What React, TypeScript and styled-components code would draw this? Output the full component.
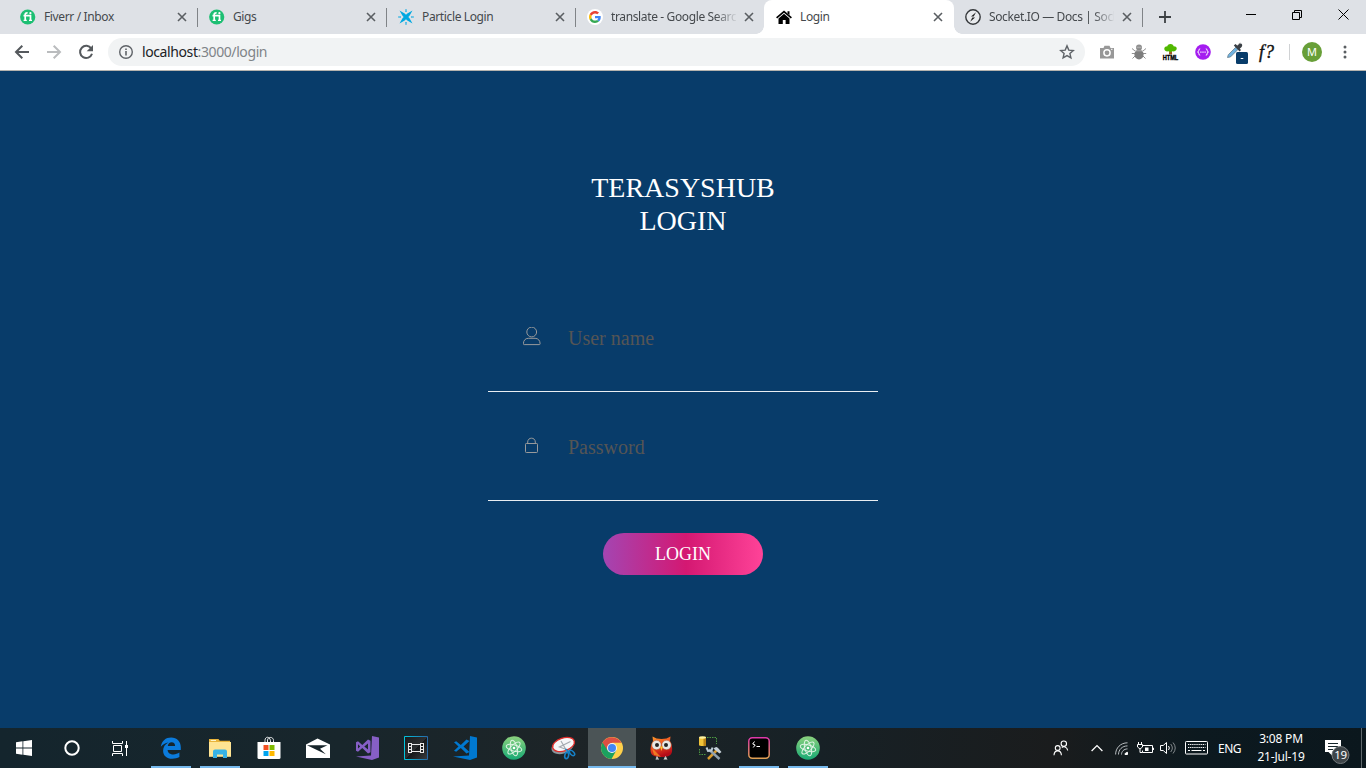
import React from 'react';
import styled, { createGlobalStyle } from 'styled-components';

const Global = createGlobalStyle`
  * { box-sizing: border-box; }
  html, body { margin: 0; padding: 0; }
  body { width: 1366px; height: 768px; overflow: hidden; background: #083c6a; }
  svg { display: block; flex: none; }
`;

const ui = `"Noto Sans", "Open Sans", sans-serif`;

const Screen = styled.div`
  display: flex;
  flex-direction: column;
  width: 1366px;
  height: 768px;
  overflow: hidden;
  font-family: ${ui};
`;

/* ---------- browser tab strip ---------- */
const TabStrip = styled.div`
  display: flex;
  flex: none;
  height: 34px;
  padding-left: 8px;
  background: #dee1e6;
`;

const Tab = styled.div<{ $active?: boolean; $divider?: boolean }>`
  position: relative;
  display: flex;
  flex: none;
  align-items: center;
  width: ${p => (p.$active ? 190 : 189)}px;
  height: 34px;
  margin-right: ${p => (p.$active ? -1 : 0)}px;
  padding: 0 ${p => (p.$active ? 1 : 0)}px 0 12px;
  border-radius: 8px 8px 0 0;
  background: ${p => (p.$active ? '#fff' : 'transparent')};
  ${p => p.$divider && `
    &::after {
      content: '';
      position: absolute;
      right: -1px;
      top: 8px;
      width: 1px;
      height: 19px;
      background: #808387;
    }`}
  ${p => p.$active && `
    &::before, &::after {
      content: '';
      position: absolute;
      bottom: 0;
      width: 8px;
      height: 8px;
    }
    &::before { left: -8px; background: radial-gradient(circle at 0 0, transparent 7.5px, #fff 8px); }
    &::after { right: -8px; background: radial-gradient(circle at 100% 0, transparent 7.5px, #fff 8px); }`}
`;

const TabTitle = styled.span<{ $fade?: boolean }>`
  flex: 1;
  margin-left: 8px;
  overflow: hidden;
  white-space: nowrap;
  font-size: 12px;
  line-height: 18px;
  letter-spacing: -0.37px;
  color: #45494d;
  ${p => p.$fade && `mask-image: linear-gradient(90deg, #000 104px, transparent 127px);`}
`;

const CloseSlot = styled.span`
  display: flex;
  justify-content: center;
  width: 16px;
  margin: 0 7px 0 5px;
`;

const NewTab = styled.div`
  display: flex;
  align-items: center;
  margin-left: 17px;
`;

const WindowButtons = styled.div`
  display: flex;
  height: 29px;
  margin-left: auto;
`;

const WindowButton = styled.span`
  display: flex;
  align-items: center;
  justify-content: center;
  width: 46px;
`;

/* ---------- browser toolbar ---------- */
const Toolbar = styled.div`
  display: flex;
  flex: none;
  align-items: center;
  height: 37px;
  padding: 0 13px 0 14px;
  background: #fff;
  border-bottom: 1px solid #b5b3ae;
`;

const NavButtons = styled.div`
  display: flex;
  gap: 16px;
`;

const AddressBar = styled.div`
  display: flex;
  align-items: center;
  width: 977px;
  height: 28px;
  margin-left: 14px;
  padding: 0 10px;
  border-radius: 14px;
  background: #f1f3f4;
`;

const Url = styled.span`
  flex: 1;
  margin-left: 8px;
  font-size: 14px;
  line-height: 20px;
  letter-spacing: -0.4px;
  color: #808488;
  b { font-weight: 400; color: #202124; }
`;

const Extensions = styled.div`
  display: flex;
  align-items: center;
  margin-left: 13px;
`;

const Extension = styled.span<{ $w: number }>`
  display: flex;
  justify-content: center;
  width: ${p => p.$w}px;
`;

const ToolDivider = styled.span`
  width: 1px;
  height: 16px;
  margin-left: 3px;
  background: #d0d2d4;
`;

const Avatar = styled.span`
  width: 20px;
  height: 20px;
  margin-left: 12px;
  border-radius: 50%;
  background: #689f38;
  color: #fff;
  font-size: 11px;
  line-height: 20px;
  text-align: center;
`;

const Menu = styled.span`
  margin-left: 20.5px;
`;

/* ---------- login page ---------- */
const Page = styled.main`
  display: flex;
  flex: 1;
  flex-direction: column;
  align-items: center;
  background: #083c6a;
  font-family: "Liberation Serif", "Times New Roman", serif;
`;

const Title = styled.h1`
  width: 200px;
  margin: 100px 0 46px;
  font-size: 28px;
  font-weight: 400;
  line-height: 33px;
  text-align: center;
  color: #fff;
`;

const Field = styled.label`
  display: flex;
  align-items: center;
  width: 390px;
  height: 109px;
  padding-left: 35px;
  border-bottom: 1px solid #e9eef2;
`;

const Input = styled.input`
  width: 280px;
  height: 30px;
  margin-left: 27px;
  padding: 2px 0 0;
  border: 0;
  outline: 0;
  background: transparent;
  font-family: inherit;
  font-size: 20px;
  color: #fff;
  &::placeholder { color: #555; opacity: 1; }
`;

const LoginButton = styled.button`
  width: 160px;
  height: 42px;
  margin-top: 32px;
  padding: 0;
  border: 0;
  border-radius: 21px;
  background: linear-gradient(90deg, #a445b2 0%, #d41872 52%, #ff4398 100%);
  color: #fff;
  font-family: inherit;
  font-size: 18px;
  line-height: 42px;
`;

/* ---------- taskbar ---------- */
const Taskbar = styled.footer`
  display: flex;
  flex: none;
  height: 40px;
  background: linear-gradient(90deg, #14252d 0, #18262c 25%, #1d2427 42%, #172126 60%, #1a1c1d 77%, #0c191f 88%, #0b171d 100%);
`;

const TaskSlot = styled.span<{ $open?: boolean; $active?: boolean }>`
  display: flex;
  flex: none;
  align-items: center;
  justify-content: center;
  width: 48px;
  background-color: ${p => (p.$active ? '#4b5456' : 'transparent')};
  ${p => (p.$open || p.$active) && `
    background-image: linear-gradient(#76b9ed, #76b9ed);
    background-repeat: no-repeat;
    background-position: center bottom;
    background-size: ${p.$active ? 48 : 40}px 2px;`}
`;

const Apps = styled.div`
  display: flex;
  gap: 1px;
  margin-left: 3px;
`;

const Tray = styled.div`
  display: flex;
  align-items: center;
  margin-left: auto;
  color: #fff;
  font-size: 12px;
`;

const TraySlot = styled.span<{ $w: number }>`
  display: flex;
  align-items: center;
  justify-content: center;
  width: ${p => p.$w}px;
`;

const Language = styled(TraySlot)`
  letter-spacing: -0.5px;
`;

const Clock = styled.div`
  width: 68px;
  text-align: center;
  line-height: 18px;
  letter-spacing: -0.2px;
`;

const ShowDesktop = styled.span`
  width: 5px;
  height: 40px;
  border-left: 1px solid #5f686c;
`;

/* ---------- icons ---------- */
const Close = () => (
  <svg width="10" height="10" viewBox="0 0 10 10" stroke="#5a5e62" strokeWidth="1.6">
    <path d="M1 1l8 8M9 1L1 9" />
  </svg>
);

const Fiverr = () => (
  <svg width="16" height="16" viewBox="0 0 16 16">
    <circle cx="7.7" cy="8" r="7.6" fill="#1dbf73" />
    <path d="M5.200 12V5.600q0-1.900 2.400-1.700M3.500 6.700h7v5.300" fill="none" stroke="#fff" strokeWidth="1.700" />
    <path d="M3.600 11.400h3.200M9 11.400h3" stroke="#fff" strokeWidth="1.200" />
    <circle cx="10.400" cy="4.200" r="1.100" fill="#fff" />
  </svg>
);

const Particle = () => (
  <svg width="16" height="16" viewBox="0 0 16 16" fill="#00a8e1">
    <path d="M1.500 1.500L6.700 4.500 8 5.700l1.300-1.200L14.500 1.500l-3 5.200L10.300 8l1.200 1.300 3 5.200-5.200-3L8 10.300l-1.300 1.200-5.200 3 3-5.200L5.700 8 4.500 6.700z" />
    <path d="M7.500 0h1l.3 3H7.200zM7.500 16h1l.3-3H7.200zM0 7.500v1l3 .3V7.200zM16 7.500v1l-3 .3V7.200z" opacity=".8" />
  </svg>
);

const Google = () => (
  <svg width="16" height="16" viewBox="0 0 16 16">
    <circle cx="8" cy="8" r="8" fill="#fff" />
    <g transform="translate(2 2) scale(.25)">
      <path fill="#EA4335" d="M24 9.500c3.540 0 6.710 1.220 9.210 3.600l6.850-6.850C35.900 2.380 30.470 0 24 0 14.620 0 6.510 5.380 2.560 13.220l7.980 6.190C12.430 13.720 17.740 9.500 24 9.500z" />
      <path fill="#4285F4" d="M46.980 24.550c0-1.570-.15-3.090-.38-4.550H24v9.020h12.940c-.58 2.960-2.260 5.480-4.780 7.180l7.730 6c4.510-4.180 7.090-10.360 7.090-17.650z" />
      <path fill="#FBBC05" d="M10.530 28.590c-.48-1.450-.76-2.990-.76-4.590s.27-3.140.76-4.590l-7.980-6.190C.92 16.460 0 20.120 0 24c0 3.880.92 7.540 2.560 10.780z" />
      <path fill="#34A853" d="M24 48c6.480 0 11.930-2.130 15.890-5.810l-7.730-6c-2.150 1.450-4.920 2.300-8.160 2.300-6.260 0-11.570-4.220-13.470-9.910l-7.980 6.190C6.510 42.620 14.620 48 24 48z" />
    </g>
  </svg>
);

const Home = () => (
  <svg width="16" height="16" viewBox="0 0 16 16">
    <path d="M8 4.700l5.500 4.700V15H9.600v-4H6.800v4H2.500V9.400z" fill="#000" />
    <path d="M.6 8.900L8 2.700l7.400 6.200" fill="none" stroke="#000" strokeWidth="1.700" />
    <path d="M11.500 2.300h2V6l-2-1.600z" />
  </svg>
);

const Socket = () => (
  <svg width="16" height="16" viewBox="0 0 16 16">
    <circle cx="8" cy="8" r="7.200" fill="#e8eaed" stroke="#35383b" strokeWidth="1.400" />
    <path d="M6 7.500L11 3.300 8.700 7.500zM7.300 8.500h2.800L5.200 12.800z" fill="#222" />
  </svg>
);

const Back = () => (
  <svg width="16" height="16" viewBox="0 0 16 16" fill="none" stroke="#55595d" strokeWidth="2">
    <path d="M15 8H2.200M8.300 1.700L2 8l6.300 6.300" />
  </svg>
);

const Forward = () => (
  <svg width="16" height="16" viewBox="0 0 16 16" fill="none" stroke="#babcbe" strokeWidth="2">
    <path d="M1 8h12.800M7.700 1.700L14 8l-6.300 6.300" />
  </svg>
);

const Reload = () => (
  <svg width="16" height="16" viewBox="0 0 16 16">
    <path d="M13.300 4.600A6.100 6.100 0 1 0 14 9.800" fill="none" stroke="#55595d" strokeWidth="2" />
    <path d="M15 1v6.300H8.700z" fill="#55595d" />
  </svg>
);

const Info = () => (
  <svg width="16" height="16" viewBox="0 0 16 16">
    <circle cx="8" cy="8" r="6.300" fill="none" stroke="#5f6368" strokeWidth="1.400" />
    <path d="M7.200 7h1.600v4.500H7.200zM7.200 4.400h1.600V6H7.200z" fill="#5f6368" />
  </svg>
);

const Star = () => (
  <svg width="16" height="16" viewBox="0 0 16 16">
    <path d="M8 1.900l1.800 4.200 4.500.4-3.400 3 1 4.400L8 11.600 4.100 13.900l1-4.400-3.400-3 4.500-.4z" fill="none" stroke="#5f6368" strokeWidth="1.400" />
  </svg>
);

const Camera = () => (
  <svg width="16" height="16" viewBox="0 0 16 16">
    <path d="M1 4h3.500L5.500 1.800h5L11.500 4H15v10.500H1z" fill="#989898" />
    <circle cx="8" cy="8.800" r="3.100" fill="none" stroke="#fff" strokeWidth="1.500" />
    <path d="M12 5.300h1.500" stroke="#fff" />
  </svg>
);

const Bug = () => (
  <svg width="16" height="17" viewBox="0 0 16 17">
    <path d="M1 4.500l3 2.500M15 4.500L12 7M.8 9.500H4m8 0h3.200M1.500 14.500L4 12m10.500 2.500L12 12" stroke="#919191" strokeWidth="1" />
    <circle cx="8" cy="3.600" r="3" fill="#8f8f8f" />
    <ellipse cx="8" cy="10.500" rx="4.600" ry="5" fill="#7d7d7d" />
    <path d="M5.500 3.300h5M4 6.800h8" stroke="#bbb" strokeWidth=".8" />
  </svg>
);

const TreeHtml = () => (
  <svg width="17" height="17" viewBox="0 0 17 17">
    <path d="M7.400 5h2.200l.6 5.500H6.900z" fill="#9a5c23" />
    <path d="M8.500 0c2 0 3 1.200 3.100 2.300C14 2.300 15 3.600 14.700 5c-.5 2-2.700 2.800-4.200 2.300-1.200.8-2.800.8-4 0C4.500 7.800 2.500 7 2.300 5c-.2-1.500 1-2.700 3.100-2.700C5.400 1 6.500 0 8.500 0z" fill="#51b800" />
    <text x="8.500" y="15.500" textAnchor="middle" textLength="15.500" lengthAdjust="spacingAndGlyphs" fontFamily="Liberation Sans, sans-serif" fontWeight="700" fontSize="6.500" stroke="#000" strokeWidth=".35">HTML</text>
  </svg>
);

const Braces = () => (
  <svg width="16" height="16" viewBox="0 0 16 16">
    <circle cx="8" cy="8" r="7.800" fill="#a41cf0" />
    <path d="M5.200 4.800Q3.900 4.800 3.900 6.200T2.500 8Q3.900 8.200 3.900 9.800T5.200 11.200M10.800 4.800Q12.100 4.800 12.100 6.200T13.500 8Q12.100 8.200 12.100 9.800T10.800 11.200" fill="none" stroke="#fff" strokeWidth="1" />
    <path d="M5.300 7.500h1.200v1.200H5.300zM7.400 7.500h1.200v1.200H7.400zM9.500 7.500h1.200v1.200H9.500z" fill="#fff" />
  </svg>
);

const Dropper = () => (
  <svg width="22" height="24" viewBox="0 0 22 24">
    <path d="M1.500 17.500l.8-2.800 7.500-7.500 2.200 2.200-7.500 7.500z" fill="#6fb3e3" stroke="#667d8c" strokeWidth=".8" />
    <path d="M7.800 5.600l5.800 5.800 1.400-1.400-1.200-1.200 1.800-1.900c1.500-1.500.2-4.400-2.300-3L11.200 5.600 9.500 4z" fill="#3a3f45" />
    <path d="M11.500 5.300l2.700-2.500" stroke="#999" />
    <rect x="10" y="12" width="12" height="12" rx="1.500" fill="#083c6a" />
    <path d="M14.700 18.500h2.600" stroke="#fff" />
  </svg>
);

const FontGlyph = styled.span`
  font: italic 400 18px/18px "Liberation Serif", serif;
  letter-spacing: 1px;
  -webkit-text-stroke: 0.4px #111;
  color: #111;
`;

const Dots = () => (
  <svg width="4" height="14" viewBox="0 0 4 14" fill="#5a5e62">
    <circle cx="2" cy="2" r="1.500" /><circle cx="2" cy="7" r="1.500" /><circle cx="2" cy="12" r="1.500" />
  </svg>
);

const UserIcon = () => (
  <svg width="18" height="20" viewBox="0 0 18 20" fill="none" stroke="#999a9b" strokeWidth="1">
    <circle cx="8.700" cy="5" r="4.900" />
    <path d="M1.200 17.600h15.100q.8 0 .8-.8c0-3.200-1.900-5.500-5-5.500H5.300c-3.100 0-4.900 2.300-4.900 5.500q0 .8.800.8z" />
  </svg>
);

const LockIcon = () => (
  <svg width="18" height="18" viewBox="0 0 18 18" fill="none" stroke="#999a9b" strokeWidth="1">
    <rect x="2.500" y="6.500" width="12" height="9" rx=".8" />
    <path d="M4.700 6.500V5C4.700 -.1 12.300 -.1 12.300 5v1.500" />
  </svg>
);

const Windows = () => (
  <svg width="16" height="16" viewBox="0 0 16 16" fill="#fff">
    <path d="M0 2.200L6.500 1.300v6.200H0zM7.300 1.200L16 0v7.500H7.300zM0 8.400h6.500v6.300L0 13.800zM7.300 8.400H16V16l-8.700-1.200z" />
  </svg>
);

const Cortana = () => (
  <svg width="16" height="16" viewBox="0 0 16 16"><circle cx="8" cy="8" r="6.700" fill="none" stroke="#fff" strokeWidth="2" /></svg>
);

const TaskView = () => (
  <svg width="17" height="17" viewBox="0 0 17 17" fill="none" stroke="#fff">
    <path d="M.5 1v2.500h10V1M.5 16v-2.500h10V16M1.500 5.500h8v6h-8zM14.500 1v15" />
    <path d="M13 5h3v3h-3z" fill="#fff" stroke="none" />
  </svg>
);

const Edge = () => (
  <svg width="22" height="22" viewBox="0 0 22 22">
    <path d="M.8 9.800C1.700 3.800 5.800 .5 11.100 .5c5.800 0 9.700 4 9.700 9.800v2.600H7.600c.2 3 2.700 4.500 5.800 4.500 2.300 0 4.300-.7 6-1.800v4.500c-2 1.100-4.500 1.700-7.100 1.700-5.700 0-9.200-3.300-9.200-8.100 0-3.700 2-6.700 5.300-8.300C5.300 6 2.600 7.300.8 9.800zM7.800 9h7.300c0-2.300-1.200-3.800-3.500-3.800-2 0-3.500 1.500-3.800 3.800z" fill="#0b7bdc" />
  </svg>
);

const Explorer = () => (
  <svg width="22" height="19" viewBox="0 0 22 19">
    <path d="M0 0h9.500l1.300 1.700H21V4H0z" fill="#e9b43c" />
    <path d="M1.700 1H7v1H1.700z" fill="#fff6c9" />
    <path d="M0 3h22v14.800H0z" fill="#ffe493" />
    <path d="M4 19v-6.500q0-2 2-2h10q2 0 2 2V19h-4v-3.500H8V19z" fill="#37b2e5" />
  </svg>
);

const Store = () => (
  <svg width="24" height="24" viewBox="0 0 24 24">
    <path d="M8 6V4.500C8 .3 12.500 0 13.500 4.500V6M10.500 6V4C11 .5 16.500 .5 16.500 4.500V6" fill="none" stroke="#e6e9ea" strokeWidth="1" />
    <path d="M.5 6h23v15.500q0 1.500-1.500 1.500H2Q.5 23 .5 21.500z" fill="#fff" />
    <path d="M6.500 9h5v5h-5z" fill="#f25022" /><path d="M12.500 9h5v5h-5z" fill="#7fba00" />
    <path d="M6.500 15h5v5h-5z" fill="#00a4ef" /><path d="M12.500 15h5v5h-5z" fill="#ffb900" />
  </svg>
);

const Mail = () => (
  <svg width="24" height="20" viewBox="0 0 24 20">
    <path d="M0 6.500L11.500 .5 24 6.500V20H0z" fill="#fff" />
    <path d="M1 7.300h20.500l-7.500 3.500 5.800 5.500z" fill="#17242a" />
  </svg>
);

const VisualStudio = () => (
  <svg width="24" height="24" viewBox="0 0 24 24" fill="#865fc5">
    <path d="M17 0l7 1.500v20L17 24 1 20.500l15-1z" />
    <path d="M1 6.200l2-1 4.300 3.700L13 3.500l2.500 1.300v11.400L13 17.500 7.300 12 3 15.700l-2-1zM3 8.300v4.300l2.200-2.100zM9.300 10.500L13 13.400V7.600z" fillRule="evenodd" />
  </svg>
);

const Movies = () => (
  <svg width="24" height="24" viewBox="0 0 24 24">
    <defs>
      <linearGradient id="movieBorder" x2="1"><stop stopColor="#00c4dd" /><stop offset="1" stopColor="#2769a8" /></linearGradient>
      <linearGradient id="movieFill" x2="1" y2="1"><stop stopColor="#191b1c" /><stop offset=".5" stopColor="#2b2e30" /><stop offset=".52" stopColor="#151719" /><stop offset="1" stopColor="#393d40" /></linearGradient>
    </defs>
    <path d="M.5 .5h23v23H.5z" fill="url(#movieFill)" stroke="url(#movieBorder)" />
    <path d="M4.500 7v10M7.500 7v10M16.500 7v10M19.500 7v10M7.500 8.500h9M7.500 15.500h9M4.500 7.500h3M4.500 10.500h3M4.500 13.500h3M4.500 16.500h3M16.500 7.500h3M16.500 10.500h3M16.500 13.500h3M16.500 16.500h3" fill="none" stroke="#e8e8e8" />
  </svg>
);

const Code = () => (
  <svg width="24" height="24" viewBox="0 0 24 24" fill="#0078d0">
    <path d="M17 0l7 1.500v20L17 24 0 20.500l16-1z" />
    <path d="M1 6.300l2.200-1 4.600 3.700L13.500 3.500l3 1.500-6 5.500 6 5.600-3 1.400-5.700-5.400-4.600 3.600-2.200-1 4.500-4.200z" />
  </svg>
);

const Atom = () => (
  <svg width="24" height="24" viewBox="0 0 24 24">
    <defs><linearGradient id="atomFill" x2="0" y2="1"><stop stopColor="#8cd27e" /><stop offset="1" stopColor="#17a974" /></linearGradient></defs>
    <circle cx="12" cy="12" r="11.800" fill="url(#atomFill)" />
    <g fill="none" stroke="#e0f4e5" strokeWidth="1">
      <ellipse cx="12" cy="12" rx="3.200" ry="8" transform="rotate(-15 12 12)" />
      <ellipse cx="12" cy="12" rx="3.200" ry="8" transform="rotate(45 12 12)" />
      <ellipse cx="12" cy="12" rx="3.200" ry="8" transform="rotate(105 12 12)" />
    </g>
    <circle cx="12" cy="12" r="1.300" fill="#fff" />
  </svg>
);

const Snip = () => (
  <svg width="25" height="24" viewBox="0 0 25 24">
    <ellipse cx="11.500" cy="10.700" rx="11.300" ry="6.900" transform="rotate(-18 11.500 10.700)" fill="#89969d" />
    <ellipse cx="12.500" cy="8.500" rx="11.300" ry="6.400" transform="rotate(-18 12.500 8.500)" fill="#f5f7f8" stroke="#de2e2b" strokeWidth="1.300" />
    <path d="M10 5l5.700 10M19.500 5.500L8.500 11l7 2.500" fill="none" stroke="#a5acb1" strokeWidth="1.200" />
    <g fill="none" stroke="#1681c8" strokeWidth="1.600">
      <ellipse cx="15.700" cy="19.500" rx="1.900" ry="3.200" transform="rotate(12 15.700 19.500)" />
      <ellipse cx="21" cy="17" rx="1.800" ry="3.200" transform="rotate(-45 21 17)" />
      <path d="M14.500 13l3.500 3" />
    </g>
  </svg>
);

const Chrome = () => (
  <svg width="22" height="22" viewBox="0 0 22 22">
    <circle cx="11" cy="11" r="11" fill="#ffd04b" />
    <path d="M11 11L1.500 5.500A11 11 0 0 0 10.500 22L15.300 13.500z" fill="#1ba15f" />
    <path d="M1.500 5.500A11 11 0 0 1 20.500 5.800H11L6.700 13.500z" fill="#dd4f43" />
    <circle cx="11" cy="11" r="5" fill="#f3f3f3" />
    <circle cx="11" cy="11" r="4" fill="#4285f4" />
  </svg>
);

const Owl = () => (
  <svg width="23" height="24" viewBox="0 0 23 24">
    <defs><linearGradient id="owlFill" x2=".4" y2="1"><stop stopColor="#ffa22b" /><stop offset=".5" stopColor="#ef4c20" /><stop offset="1" stopColor="#b40c18" /></linearGradient></defs>
    <path d="M2.500 .5Q6 3 11.500 3T20.500 .5L20 5c2 3 2.500 7 2 11-1 4-4.500 5-10.500 5S1.500 20 .7 16C.2 12 1 8 3 5z" fill="url(#owlFill)" />
    <path d="M2 12l9 9-7-2z" fill="#ff9b24" opacity=".7" />
    <path d="M6 23.500l1-3 1.500 3M14 23.500l1.500-3 1.500 3" fill="#d9d9d9" stroke="#bbb" />
    <circle cx="6.500" cy="9" r="4.700" fill="#e8e8e5" stroke="#aa5a37" strokeWidth=".5" />
    <circle cx="16.500" cy="9" r="4.700" fill="#e8e8e5" stroke="#aa5a37" strokeWidth=".5" />
    <circle cx="7" cy="9" r="2" fill="#252525" /><circle cx="16" cy="9" r="2" fill="#252525" />
    <path d="M10 10.500h3L11.500 15z" fill="#ffc52a" />
  </svg>
);

const DbTools = () => (
  <svg width="24" height="24" viewBox="0 0 24 24">
    <path d="M9 1.500h9.500V8M1.500 13v5.500H8" fill="none" stroke="#4d9b43" strokeDasharray="1.500 1" />
    <path d="M1 1.500v7.800c0 1 7 1 7 0V1.500z" fill="#f0c33a" /><path d="M5.500 1.500H8v8q-1 .7-2.500.7z" fill="#b98216" />
    <ellipse cx="4.500" cy="1.500" rx="3.500" ry="1.200" fill="#fff2a0" />
    <path d="M10 23l9-9" stroke="#d89a2d" strokeWidth="2.500" />
    <path d="M11 13.500l10.500 9.500" stroke="#91a2b0" strokeWidth="2.500" />
    <path d="M8.500 11.500l1.500 3.500 3.500-.5 1-3" fill="none" stroke="#bdcbd5" strokeWidth="2" />
    <path d="M15.500 12.500q3-3 5 0l3 3.500-2 1.500-5-4z" fill="#c5d0d8" />
  </svg>
);

const Terminal = () => (
  <svg width="22" height="22" viewBox="0 0 22 22">
    <defs><linearGradient id="terminalEdge" x2="0" y2="1"><stop stopColor="#df39ab" /><stop offset="1" stopColor="#e0a052" /></linearGradient></defs>
    <rect x=".8" y=".8" width="20.400" height="20.400" rx="3.500" fill="#000" stroke="url(#terminalEdge)" strokeWidth="1.500" />
    <path d="M6.500 4.500L4.700 7l2.500 1-2 2.500M8.500 9.500h3.500" fill="none" stroke="#fff" />
  </svg>
);

const People = () => (
  <svg width="16" height="17" viewBox="0 0 16 17" fill="none" stroke="#fff" strokeWidth="1.100">
    <circle cx="10.800" cy="3.700" r="2.700" /><circle cx="4.700" cy="8" r="2.400" />
    <path d="M8.800 7.500C10.500 6.200 14 6.500 14.700 10.500M1 15.300C1.200 9.400 8.200 9.400 8.400 15.300" />
  </svg>
);

const Chevron = () => (
  <svg width="12" height="8" viewBox="0 0 12 8" fill="none" stroke="#fff" strokeWidth="1.300"><path d="M.6 7L6 1.600 11.400 7" /></svg>
);

const Wifi = () => (
  <svg width="13" height="13" viewBox="0 0 13 13" fill="none" stroke="#b8bdc0" strokeWidth="1">
    <path d="M.6 12.500C.6 6 5.500 .8 12.500 .8M3.500 12.500c0-4.800 3.700-8.600 9-8.600M6.500 12.500c0-3 2.400-5.600 6-5.600" />
    <path d="M10 12.500c0-1.200 1-2.200 2.500-2.200v2.200z" fill="#fff" stroke="#fff" />
  </svg>
);

const Battery = () => (
  <svg width="17" height="14" viewBox="0 0 17 14" fill="none" stroke="#fff">
    <path d="M5 4.500h10.500v7H5.500V9.500M15.500 7h1v2" />
    <path d="M8 6.500h3.500v3.500H8z" fill="#fff" stroke="none" />
    <path d="M1.500 1v2.500M4.500 1v2.500M.5 3.500h5V6L3 8 .5 6zM3 8v3.500h2.500" />
  </svg>
);

const Volume = () => (
  <svg width="17" height="14" viewBox="0 0 17 14" fill="none" stroke="#fff">
    <path d="M.5 4.500h2.700L6.500 1.500v11L3.200 9.500H.5z" />
    <path d="M8.500 5q1.700 2 0 4" /><path d="M10.700 3q3.300 4 0 8M13 1.500q4.500 5.500 0 11" stroke="#83898c" />
  </svg>
);

const Keyboard = () => (
  <svg width="23" height="14" viewBox="0 0 23 14" fill="none" stroke="#fff">
    <rect x=".5" y=".5" width="22" height="12.500" rx=".8" />
    <path d="M3 3.500h17.500M3 6.500h17.500" strokeDasharray="1.300 .8" /><path d="M3 9.500h2M6.500 9.500h10M18 9.500h2" />
  </svg>
);

const ActionCenter = () => (
  <svg width="28" height="34" viewBox="0 -8 28 34">
    <path d="M1 1h16v12H8v3.500L4.500 13H1z" fill="#fff" />
    <path d="M4 4.500h10M4 7.500h10M4 10.500h5" stroke="#17262c" />
    <circle cx="16.500" cy="16" r="8.500" fill="#3d4448" stroke="#747a7d" />
    <text x="16.500" y="20" textAnchor="middle" fontSize="11.500" fill="#fff" fontFamily="Noto Sans, sans-serif" letterSpacing="-.4">19</text>
  </svg>
);

const tabs = [
  { title: 'Fiverr / Inbox', icon: <Fiverr />, divider: true },
  { title: 'Gigs', icon: <Fiverr />, divider: true },
  { title: 'Particle Login', icon: <Particle />, divider: true },
  { title: 'translate - Google Search', icon: <Google />, fade: true },
  { title: 'Login', icon: <Home />, active: true },
  { title: 'Socket.IO — Docs | Socket.IO', icon: <Socket />, divider: true, fade: true },
];

const apps = [
  { icon: <Edge />, open: true }, { icon: <Explorer />, open: true }, { icon: <Store /> }, { icon: <Mail /> },
  { icon: <VisualStudio /> }, { icon: <Movies /> }, { icon: <Code /> }, { icon: <Atom /> }, { icon: <Snip /> },
  { icon: <Chrome />, active: true }, { icon: <Owl /> }, { icon: <DbTools /> }, { icon: <Terminal />, open: true },
  { icon: <Atom />, open: true },
];

export default function App() {
  return (
    <Screen>
      <Global />
      <TabStrip>
        {tabs.map(t => (
          <Tab key={t.title} $active={t.active} $divider={t.divider}>
            {t.icon}
            <TabTitle $fade={t.fade}>{t.title}</TabTitle>
            <CloseSlot><Close /></CloseSlot>
          </Tab>
        ))}
        <NewTab>
          <svg width="12" height="12" viewBox="0 0 12 12" stroke="#3c4043" strokeWidth="1.800"><path d="M6 0v12M0 6h12" /></svg>
        </NewTab>
        <WindowButtons>
          <WindowButton><svg width="10" height="10" stroke="#000"><path d="M0 4.500h10" /></svg></WindowButton>
          <WindowButton><svg width="10" height="10" stroke="#000" fill="none"><path d="M.5 2.500h7v7h-7zM2.500 2.500v-2h7v7h-2" /></svg></WindowButton>
          <WindowButton><svg width="11" height="11" stroke="#000"><path d="M.5 .5l10 10M10.500 .5l-10 10" /></svg></WindowButton>
        </WindowButtons>
      </TabStrip>
      <Toolbar>
        <NavButtons><Back /><Forward /><Reload /></NavButtons>
        <AddressBar>
          <Info />
          <Url><b>localhost</b>:3000/login</Url>
          <Star />
        </AddressBar>
        <Extensions>
          <Extension $w={18}><Camera /></Extension>
          <Extension $w={46}><Bug /></Extension>
          <Extension $w={17}><TreeHtml /></Extension>
          <Extension $w={47}><Braces /></Extension>
          <Extension $w={22}><Dropper /></Extension>
          <Extension $w={38}><FontGlyph>f?</FontGlyph></Extension>
        </Extensions>
        <ToolDivider />
        <Avatar>M</Avatar>
        <Menu><Dots /></Menu>
      </Toolbar>
      <Page>
        <Title>TERASYSHUB LOGIN</Title>
        <Field><UserIcon /><Input type="text" placeholder="User name" /></Field>
        <Field><LockIcon /><Input type="password" placeholder="Password" /></Field>
        <LoginButton>LOGIN</LoginButton>
      </Page>
      <Taskbar>
        <TaskSlot><Windows /></TaskSlot>
        <TaskSlot><Cortana /></TaskSlot>
        <TaskSlot><TaskView /></TaskSlot>
        <Apps>
          {apps.map((a, i) => <TaskSlot key={i} $open={a.open} $active={a.active}>{a.icon}</TaskSlot>)}
        </Apps>
        <Tray>
          <TraySlot $w={48}><People /></TraySlot>
          <TraySlot $w={24}><Chevron /></TraySlot>
          <TraySlot $w={25}><Wifi /></TraySlot>
          <TraySlot $w={22}><Battery /></TraySlot>
          <TraySlot $w={24}><Volume /></TraySlot>
          <TraySlot $w={32}><Keyboard /></TraySlot>
          <Language $w={35}>ENG</Language>
          <Clock>3:08 PM<br />21-Jul-19</Clock>
          <TraySlot $w={46}><ActionCenter /></TraySlot>
          <ShowDesktop />
        </Tray>
      </Taskbar>
    </Screen>
  );
}
